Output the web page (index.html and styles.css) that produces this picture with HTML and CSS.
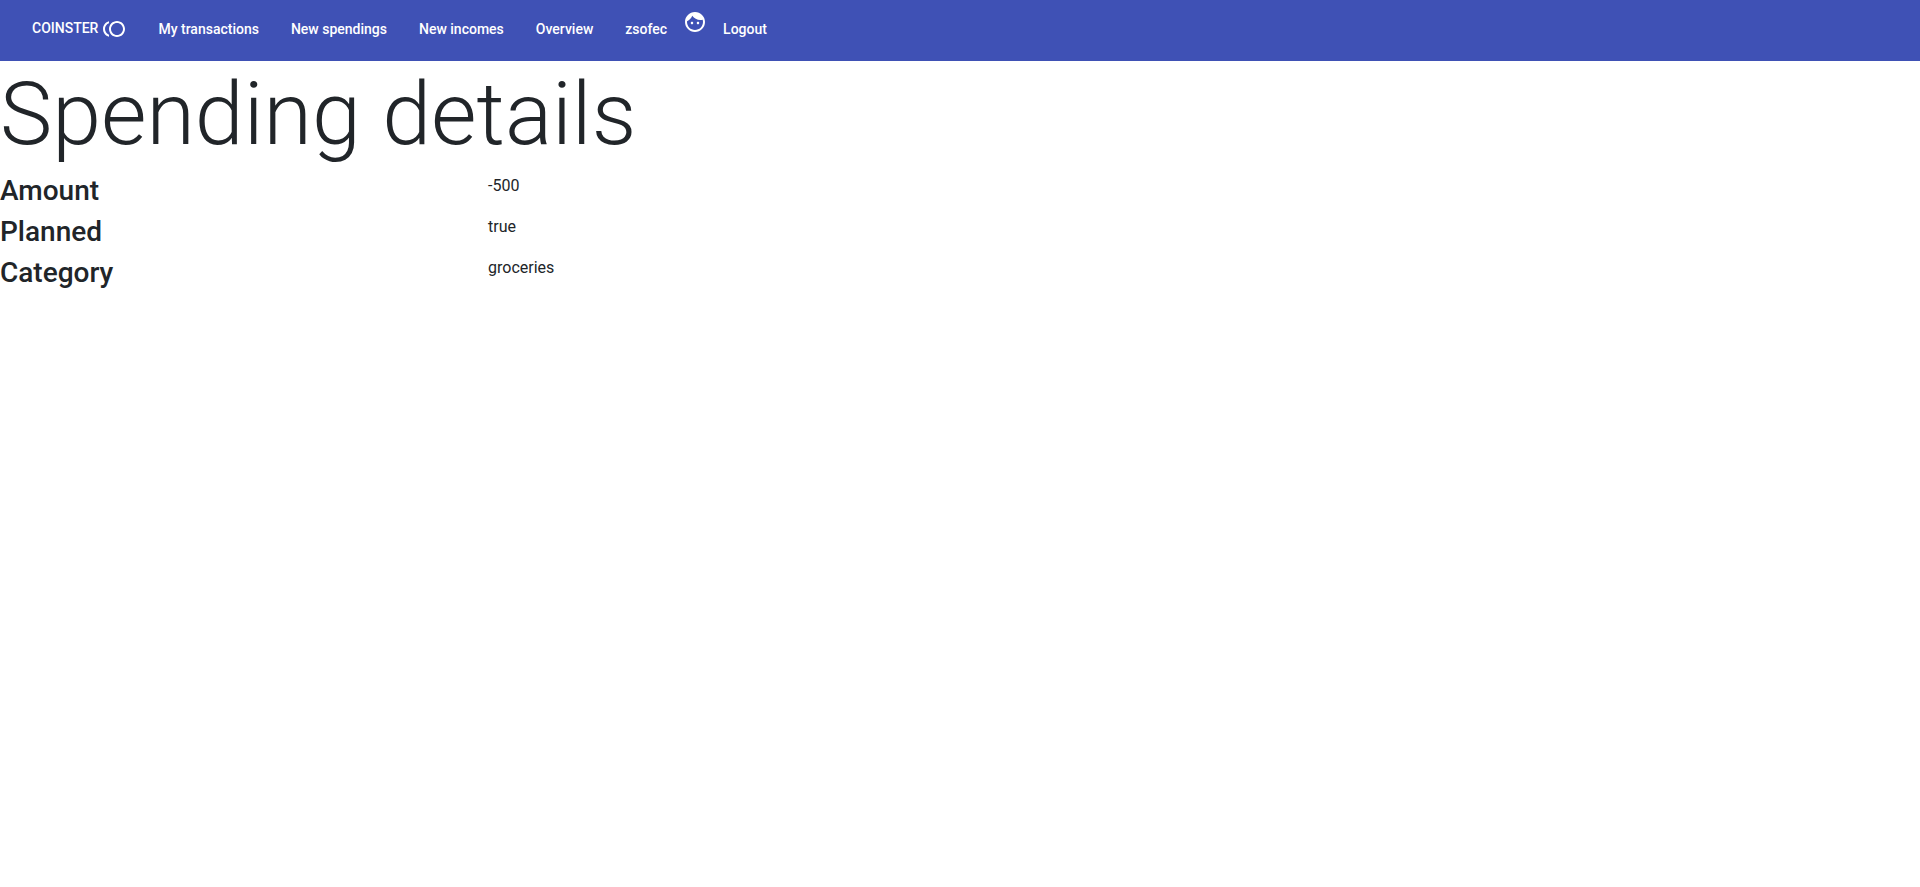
FILE: index.html
```html
<!DOCTYPE html>
<html lang="en">
<head>
<meta charset="utf-8">
<title>Coinster</title>
<link rel="stylesheet" href="styles.css">
</head>
<body>
<nav class="toolbar">
  <a class="nav-button" href="#"><span class="brand">COINSTER</span><svg class="icon" viewBox="0 0 24 24" aria-hidden="true"><path d="M15 4c-4.420 0-8 3.580-8 8s3.580 8 8 8 8-3.580 8-8-3.580-8-8-8zm0 14c-3.310 0-6-2.690-6-6s2.690-6 6-6 6 2.690 6 6-2.690 6-6 6zM3 12c0-2.610 1.670-4.830 4-5.650V4.260C3.550 5.150 1 8.270 1 12s2.550 6.850 6 7.740v-2.090c-2.330-.82-4-3.040-4-5.650z"/></svg></a>
  <a class="nav-button" href="#">My transactions</a>
  <a class="nav-button" href="#">New spendings</a>
  <a class="nav-button" href="#">New incomes</a>
  <a class="nav-button" href="#">Overview</a>
  <a class="nav-button" href="#">zsofec</a>
  <svg class="icon" viewBox="0 0 24 24" aria-hidden="true"><path d="M9 11.750c-.69 0-1.250.56-1.250 1.250s.56 1.250 1.250 1.250 1.250-.56 1.250-1.250-.56-1.250-1.250-1.250zm6 0c-.69 0-1.250.56-1.250 1.250s.56 1.250 1.250 1.250 1.250-.56 1.250-1.250-.56-1.250-1.250-1.250zM12 2C6.480 2 2 6.480 2 12s4.480 10 10 10 10-4.480 10-10S17.520 2 12 2zm0 18c-4.410 0-8-3.590-8-8 0-.29.02-.58.05-.86 2.360-1.050 4.230-2.980 5.210-5.370C11.070 8.330 14.050 10 17.420 10c.78 0 1.530-.09 2.250-.26.21.71.33 1.470.33 2.260 0 4.410-3.590 8-8 8z"/></svg>
  <button class="nav-button" type="button">Logout</button>
</nav>
<main>
  <h1 class="title">Spending details</h1>
  <dl class="details">
    <dt>Amount</dt><dd>-500</dd>
    <dt>Planned</dt><dd>true</dd>
    <dt>Category</dt><dd>groceries</dd>
  </dl>
</main>
</body>
</html>
```
FILE: styles.css
```css
* { box-sizing: border-box; }
body { margin: 0; font: 400 16px/24px Roboto, sans-serif; color: #212529; background: #fff; }
.toolbar { display: flex; align-items: flex-start; padding: 10px 16px 13px; background: #3f51b5; color: #fff; }
.nav-button { display: flex; align-items: center; gap: 4px; height: 38px; padding: 0 16px; border: 0; background: none; color: inherit; font: 500 14px/38px Roboto, sans-serif; text-decoration: none; }
.brand { align-self: flex-start; line-height: 36px; }
.icon { width: 24px; height: 24px; fill: currentColor; }
.title { margin: 0 0 7px; font-size: 88px; line-height: 106px; font-weight: 300; }
.details { display: grid; grid-template-columns: 25% 75%; row-gap: 8px; margin: 0; }
.details dt { font-size: 28px; line-height: 33px; font-weight: 500; }
.details dd { margin: 0; padding-left: 8px; }
```
